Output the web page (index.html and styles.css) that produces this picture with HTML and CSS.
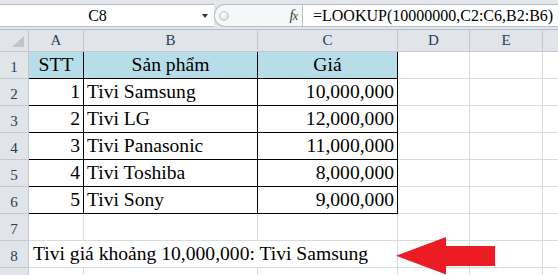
FILE: index.html
```html
<!DOCTYPE html>
<html>
<head>
<meta charset="utf-8">
<link rel="stylesheet" href="styles.css">
</head>
<body>
<div class="app">
  <div class="fbar">
    <div class="namebox"><span class="ref">C8</span><span class="dd"></span></div>
    <div class="mid">
      <svg class="grip" width="12" height="12" viewBox="0 0 12 12"><defs><radialGradient id="g" cx="0.4" cy="0.35" r="0.7"><stop offset="0" stop-color="#ffffff"/><stop offset="1" stop-color="#d4d7dc"/></radialGradient></defs><circle cx="6" cy="6" r="4.5" fill="url(#g)" stroke="#c4c8ce" stroke-width="1"/></svg>
      <span class="fx"><i>f</i><i class="x">x</i></span>
    </div>
    <div class="formula">=LOOKUP(10000000,C2:C6,B2:B6)</div>
  </div>
  <div class="sheet">
    <div class="hd corner"><span class="tri"></span></div>
    <div class="hd col">A</div>
    <div class="hd col">B</div>
    <div class="hd col">C</div>
    <div class="hd col">D</div>
    <div class="hd col">E</div>
    <div class="hd col last"></div>

    <div class="hd row">1</div>
    <div class="c t th">STT</div>
    <div class="c t th">Sản phẩm</div>
    <div class="c t th">Giá</div>
    <div class="c"></div><div class="c"></div><div class="c last"></div>

    <div class="hd row">2</div>
    <div class="c t num">1</div>
    <div class="c t">Tivi Samsung</div>
    <div class="c t num">10,000,000</div>
    <div class="c"></div><div class="c"></div><div class="c last"></div>

    <div class="hd row">3</div>
    <div class="c t num">2</div>
    <div class="c t">Tivi LG</div>
    <div class="c t num">12,000,000</div>
    <div class="c"></div><div class="c"></div><div class="c last"></div>

    <div class="hd row">4</div>
    <div class="c t num">3</div>
    <div class="c t">Tivi Panasonic</div>
    <div class="c t num">11,000,000</div>
    <div class="c"></div><div class="c"></div><div class="c last"></div>

    <div class="hd row">5</div>
    <div class="c t num">4</div>
    <div class="c t">Tivi Toshiba</div>
    <div class="c t num">8,000,000</div>
    <div class="c"></div><div class="c"></div><div class="c last"></div>

    <div class="hd row">6</div>
    <div class="c t num">5</div>
    <div class="c t">Tivi Sony</div>
    <div class="c t num">9,000,000</div>
    <div class="c"></div><div class="c"></div><div class="c last"></div>

    <div class="hd row">7</div>
    <div class="c"></div><div class="c"></div><div class="c"></div>
    <div class="c"></div><div class="c"></div><div class="c last"></div>

    <div class="hd row">8</div>
    <div class="c span3">Tivi giá khoảng 10,000,000: Tivi Samsung</div>
    <div class="c"></div><div class="c"></div><div class="c last"></div>

    <div class="hd row">9</div>
    <div class="c"></div><div class="c"></div><div class="c"></div>
    <div class="c"></div><div class="c"></div><div class="c last"></div>
  </div>
  <svg class="arrow" width="558" height="275" viewBox="0 0 558 275"><polygon points="396,255.7 446,237 446,246 495,246 495,266 446,266 446,274.5" fill="#ed1c24"/></svg>
</div>
</body>
</html>
```
FILE: styles.css
```css
* { box-sizing: border-box; }
html, body { margin: 0; padding: 0; background: #fff; }
body { width: 558px; height: 275px; overflow: hidden; font-family: "Liberation Serif", "Times New Roman", serif; }
.app { position: relative; width: 558px; height: 275px; overflow: hidden; }

.fbar {
  display: flex;
  height: 30px;
  padding-top: 4px;
  background: #e3e6ea;
  border-bottom: 1px solid #b9bec6;
}
.namebox {
  width: 214px;
  height: 23px;
  display: flex;
  align-items: center;
  background: #fff;
  border-top: 1px solid #b9bec6;
  border-bottom: 1px solid #b9bec6;
}
.ref {
  width: 195px;
  text-align: center;
  font-size: 16px;
  line-height: 21px;
  color: #000;
}
.dd {
  width: 0; height: 0;
  margin-left: 7px;
  border-left: 3.5px solid transparent;
  border-right: 3.5px solid transparent;
  border-top: 4px solid #333;
}
.mid {
  width: 88px;
  height: 23px;
  display: flex;
  align-items: center;
  background: #f6f7f8;
  border: 1px solid #b9bec6;
  border-right: none;
  border-radius: 11px 0 0 11px;
  padding-left: 3px;
}
.grip { display: block; }
.fx {
  margin-left: auto;
  margin-right: 5px;
  font-size: 15px;
  line-height: 21px;
  color: #3b3b3b;
  letter-spacing: -1px;
}
.fx .x { font-size: 12px; }
.formula {
  flex: 1;
  height: 23px;
  background: #fff;
  border: 1px solid #b9bec6;
  border-right: none;
  padding-left: 10px;
  font-size: 16px;
  line-height: 21px;
  color: #000;
  white-space: nowrap;
}

.sheet {
  display: grid;
  grid-template-columns: 29px 55px 174px 140px 72px 73px 1fr;
  grid-template-rows: 22px repeat(9, 27px);
}
.hd {
  background: #e1e4e8;
  border-right: 1px solid #c3c8ce;
  border-bottom: 1px solid #c3c8ce;
  color: #243f60;
  font-size: 15px;
  text-align: center;
}
.hd.col { line-height: 21px; }
.hd.row { padding-top: 4px; line-height: 22px; }
.corner { position: relative; }
.tri {
  position: absolute;
  right: 4px;
  bottom: 4px;
  width: 0; height: 0;
  border-left: 12px solid transparent;
  border-bottom: 11px solid #c2c6cc;
}
.c {
  border-right: 1px solid #d9dadc;
  border-bottom: 1px solid #d9dadc;
  font-size: 19.6px;
  line-height: 26px;
  color: #000;
  white-space: nowrap;
  padding: 0 3px;
}
.c.last, .hd.last { border-right: none; }
.c.t { border-right-color: #000; border-bottom-color: #000; }
.c.th { background: #b7dee8; text-align: center; }
.c.num { text-align: right; }
.c.span3 { grid-column: span 3; padding-left: 4px; }

.arrow { position: absolute; left: 0; top: 0; pointer-events: none; }
```
